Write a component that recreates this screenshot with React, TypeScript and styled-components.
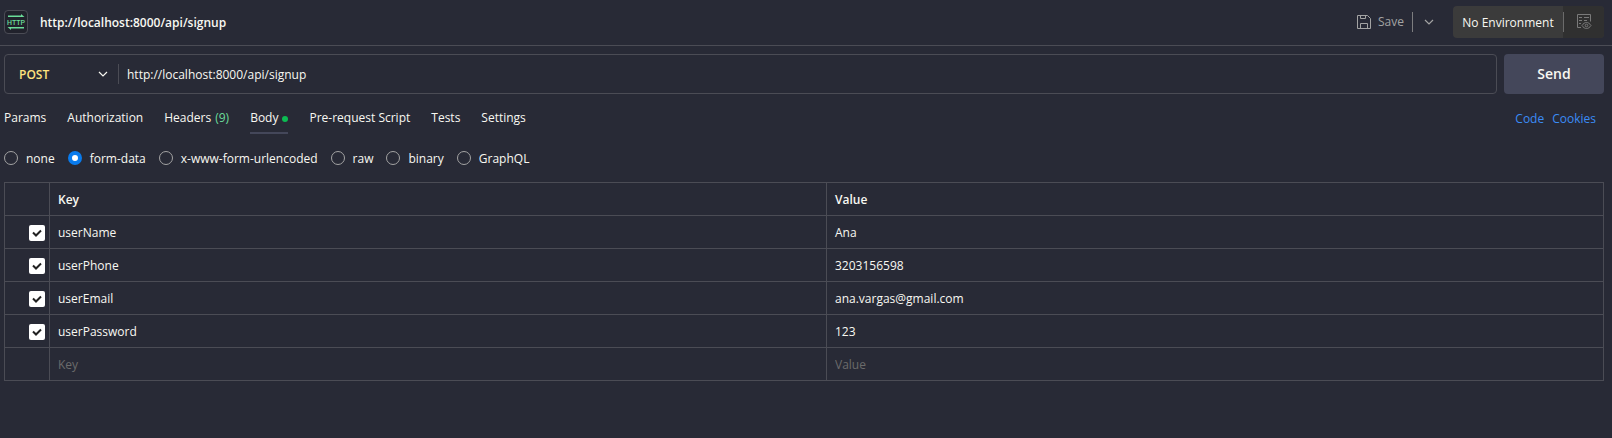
import React, { useState } from "react";
import styled, { createGlobalStyle } from "styled-components";

const color = {
  bg: "#282a36",
  line: "#4b4c55",
  text: "#f8f8f2",
  muted: "#a3a3a3",
  faint: "#6b6b6b",
  accent: "#44475a",
  blue: "#097bed",
  link: "#3b8cf5",
  green: "#0cbb52",
  count: "#6bdd9a",
  post: "#ffe47e",
};

const GlobalStyle = createGlobalStyle`
  *, *::before, *::after { box-sizing: border-box; }
  body {
    margin: 0;
    min-height: 100vh;
    background: ${color.bg};
    color: ${color.text};
    font: 500 12px/16px "Open Sans", "Noto Sans", sans-serif;
  }
  button, input, select { font: inherit; color: inherit; }
  button { padding: 0; border: 0; background: none; cursor: pointer; }
`;

const Header = styled.header`
  display: flex;
  align-items: center;
  height: 46px;
  padding: 0 8px 1px 4px;
  border-bottom: 1px solid ${color.line};
`;

const Protocol = styled.span`
  display: flex;
  width: 24px;
  height: 24px;
  border: 1px solid ${color.line};
  border-radius: 4px;
  background: #21222c;
`;

const Title = styled.h1`
  flex: 1;
  margin: 0 0 0 12px;
  padding-top: 2px;
  font-size: 12px;
  line-height: 16px;
  font-weight: 600;
`;

const SaveButton = styled.button`
  display: flex;
  align-items: center;
  gap: 7px;
  height: 20px;
  padding-right: 8px;
  border-right: 1px solid #7d7d7f;
  color: ${color.muted};
`;

const SaveMenu = styled.button`
  display: flex;
  margin: 0 19px 0 11px;
  color: ${color.muted};
`;

const Environment = styled.div`
  display: flex;
  height: 32px;
  border-radius: 4px;
  overflow: hidden;
  background: #3b3b3b;
`;

const EnvironmentName = styled.button`
  width: 110px;
  padding-top: 2px;
  text-align: center;
`;

const EnvironmentPreview = styled.button`
  display: flex;
  align-items: center;
  justify-content: center;
  width: 41px;
  background: linear-gradient(#6b6b6b, #6b6b6b) 0 50% / 1px 20px no-repeat #303030;
  color: #7a7a7a;
`;

const RequestForm = styled.form`
  display: flex;
  gap: 7px;
  padding: 8px 8px 0 4px;
`;

const RequestBar = styled.div`
  display: flex;
  flex: 1;
  align-items: center;
  height: 40px;
  border: 1px solid ${color.line};
  border-radius: 4px;
`;

const MethodField = styled.label`
  display: grid;
  align-items: center;
  width: 114px;
  height: 20px;
  border-right: 1px solid ${color.line};
  svg {
    grid-area: 1 / 1;
    justify-self: end;
    margin-right: 10px;
    pointer-events: none;
  }
`;

const MethodSelect = styled.select`
  grid-area: 1 / 1;
  width: 100%;
  padding: 2px 0 0 14px;
  border: 0;
  appearance: none;
  background: none;
  color: ${color.post};
  font-weight: 600;
  outline: none;
`;

const UrlInput = styled.input`
  flex: 1;
  min-width: 0;
  padding: 2px 8px 0;
  border: 0;
  background: none;
  outline: none;
`;

const SendButton = styled.button`
  width: 100px;
  border-radius: 4px;
  background: ${color.accent};
  font-size: 14px;
  font-weight: 600;
`;

const TabBar = styled.div`
  display: flex;
  justify-content: space-between;
  padding: 16px 16px 0 4px;
`;

const Tabs = styled.nav`
  display: flex;
  gap: 21px;
`;

const Tab = styled.button<{ $active?: boolean }>`
  display: flex;
  align-items: center;
  height: 24px;
  padding-bottom: ${({ $active }) => ($active ? "6px" : "8px")};
  border-bottom: ${({ $active }) => ($active ? `2px solid ${color.accent}` : "0")};
`;

const Count = styled.span`
  margin-left: 4px;
  color: ${color.count};
`;

const Dot = styled.span`
  width: 6px;
  height: 6px;
  margin: 2px 0 0 4px;
  border-radius: 50%;
  background: ${color.green};
`;

const Links = styled.div`
  display: flex;
  gap: 8px;
  padding-top: 1px;
  a { color: ${color.link}; text-decoration: none; }
`;

const BodyTypes = styled.div`
  display: flex;
  gap: 13px;
  height: 48px;
  padding: 0 4px;
`;

const BodyType = styled.label`
  display: flex;
  align-items: center;
  gap: 8px;
`;

const BodyTypeName = styled.span`
  padding-top: 2px;
`;

const Radio = styled.input`
  appearance: none;
  width: 14px;
  height: 14px;
  margin: 0;
  border: 1px solid ${color.muted};
  border-radius: 50%;
  &:checked {
    border: 4px solid ${color.blue};
    background: #fff;
  }
`;

const TableWrap = styled.div`
  padding: 0 8px 0 4px;
`;

const Table = styled.table`
  width: 100%;
  border-collapse: collapse;
  table-layout: fixed;
  th, td {
    height: 33px;
    padding: 2px 8px 0;
    border: 1px solid ${color.line};
    text-align: left;
    font-weight: 500;
  }
  th { font-weight: 600; }
`;

const CheckColumn = styled.col`
  width: 45px;
`;

const CheckCell = styled.td`
  && { padding: 2px 4px 0 24px; }
`;

const CheckField = styled.label`
  display: grid;
  width: 16px;
  height: 16px;
  > * { grid-area: 1 / 1; }
  svg { pointer-events: none; }
`;

const Checkbox = styled.input`
  appearance: none;
  width: 16px;
  height: 16px;
  margin: 0;
  border-radius: 2px;
  background: #fff;
  &:not(:checked) + svg { visibility: hidden; }
`;

const CellInput = styled.input`
  display: block;
  width: 100%;
  padding: 0;
  border: 0;
  background: none;
  outline: none;
  &::placeholder { color: ${color.faint}; opacity: 1; }
`;

const HttpIcon = () => (
  <svg width="22" height="22" viewBox="0 0 22 22" fill={color.count} aria-hidden="true">
    <path d="M3 4.500h13V3l3.500 3H3zM19 17.500H6V19L2.500 16H19z" />
    <text x="11" y="14" fontFamily="Roboto, sans-serif" fontSize="7" fontWeight="500" textAnchor="middle">HTTP</text>
  </svg>
);

const SaveIcon = () => (
  <svg width="14" height="14" viewBox="0 0 14 14" fill="none" stroke="currentColor" aria-hidden="true">
    <path d="M.5.5h10l3 3v10H.5zM3.500.5v3h5v-3M3.500 13.500v-5h7v5" />
  </svg>
);

const Chevron = () => (
  <svg width="10" height="6" viewBox="0 0 10 6" fill="none" stroke="currentColor" strokeWidth="1.200" aria-hidden="true">
    <path d="M1 1l4 4 4-4" />
  </svg>
);

const PreviewIcon = () => (
  <svg width="16" height="16" viewBox="0 0 16 16" fill="none" stroke="currentColor" aria-hidden="true">
    <path d="M5 13.500H1.500V.5h13v7M3 3.500h3M8 3.500h5M3 6.500h3M8 6.500h3M3 9.500h2" />
    <path d="M6 11.500c2.500-4 6.500-4 9 0c-2.500 4-6.500 4-9 0z" />
    <circle cx="10.500" cy="11.500" r="1.300" />
  </svg>
);

const Tick = () => (
  <svg width="16" height="16" viewBox="0 0 16 16" fill="none" stroke="#212121" strokeWidth="2" aria-hidden="true">
    <path d="M4 7.500l3 3 5-5" />
  </svg>
);

const bodyTypes = ["none", "form-data", "x-www-form-urlencoded", "raw", "binary", "GraphQL"];

const fields = [
  { key: "userName", value: "Ana" },
  { key: "userPhone", value: "3203156598" },
  { key: "userEmail", value: "ana.vargas@gmail.com" },
  { key: "userPassword", value: "123" },
];

export default function App() {
  const [bodyType, setBodyType] = useState("form-data");

  return (
    <>
      <GlobalStyle />
      <Header>
        <Protocol><HttpIcon /></Protocol>
        <Title>http://localhost:8000/api/signup</Title>
        <SaveButton type="button"><SaveIcon />Save</SaveButton>
        <SaveMenu type="button" aria-label="Save options"><Chevron /></SaveMenu>
        <Environment>
          <EnvironmentName type="button">No Environment</EnvironmentName>
          <EnvironmentPreview type="button" aria-label="Environment quick look"><PreviewIcon /></EnvironmentPreview>
        </Environment>
      </Header>
      <main>
        <RequestForm onSubmit={(e) => e.preventDefault()}>
          <RequestBar>
            <MethodField>
              <MethodSelect aria-label="Method" defaultValue="POST">
                <option>POST</option>
              </MethodSelect>
              <Chevron />
            </MethodField>
            <UrlInput aria-label="Request URL" defaultValue="http://localhost:8000/api/signup" />
          </RequestBar>
          <SendButton type="submit">Send</SendButton>
        </RequestForm>
        <TabBar>
          <Tabs>
            <Tab type="button">Params</Tab>
            <Tab type="button">Authorization</Tab>
            <Tab type="button">Headers<Count>(9)</Count></Tab>
            <Tab type="button" $active>Body<Dot /></Tab>
            <Tab type="button">Pre-request Script</Tab>
            <Tab type="button">Tests</Tab>
            <Tab type="button">Settings</Tab>
          </Tabs>
          <Links>
            <a href="#code">Code</a>
            <a href="#cookies">Cookies</a>
          </Links>
        </TabBar>
        <BodyTypes role="radiogroup" aria-label="Body type">
          {bodyTypes.map((type) => (
            <BodyType key={type}>
              <Radio type="radio" name="body-type" checked={bodyType === type} onChange={() => setBodyType(type)} />
              <BodyTypeName>{type}</BodyTypeName>
            </BodyType>
          ))}
        </BodyTypes>
        <TableWrap>
          <Table>
            <colgroup>
              <CheckColumn />
              <col />
              <col />
            </colgroup>
            <thead>
              <tr><th aria-label="Enabled" /><th>Key</th><th>Value</th></tr>
            </thead>
            <tbody>
              {fields.map(({ key, value }) => (
                <tr key={key}>
                  <CheckCell>
                    <CheckField>
                      <Checkbox type="checkbox" defaultChecked aria-label={`Send ${key}`} />
                      <Tick />
                    </CheckField>
                  </CheckCell>
                  <td>{key}</td>
                  <td>{value}</td>
                </tr>
              ))}
              <tr>
                <td />
                <td><CellInput aria-label="New key" placeholder="Key" /></td>
                <td><CellInput aria-label="New value" placeholder="Value" /></td>
              </tr>
            </tbody>
          </Table>
        </TableWrap>
      </main>
    </>
  );
}
